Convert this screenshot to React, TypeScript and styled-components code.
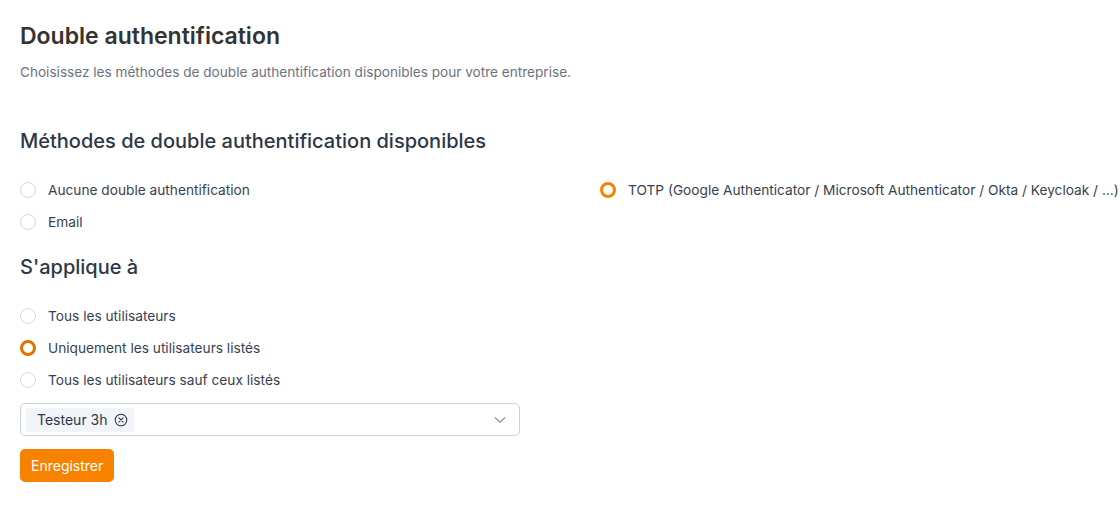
import React, { useState } from 'react';
import styled, { createGlobalStyle } from 'styled-components';

const GlobalStyle = createGlobalStyle`
  html, body {
    margin: 0;
    padding: 0;
    background: #ffffff;
    overflow: hidden;
  }
  body {
    font-family: Inter, "Noto Sans", sans-serif;
    -webkit-font-smoothing: antialiased;
  }
`;

const Page = styled.div`
  padding: 20px 0 0 20px;
`;

const Title = styled.h1`
  margin: 0;
  font-size: 23px;
  line-height: 32px;
  font-weight: 600;
  color: #333333;
`;

const Subtitle = styled.p`
  margin: 10px 0 0 0;
  font-size: 13.6px;
  line-height: 20px;
  color: #6b7280;
`;

const SectionTitle = styled.h2<{ $top: number }>`
  margin: ${({ $top }) => $top}px 0 0 0;
  font-size: 20px;
  line-height: 28px;
  font-weight: 500;
  color: #2d3748;
`;

const OptionGrid = styled.div`
  display: grid;
  grid-template-columns: 580px 1fr;
  grid-auto-flow: column;
  grid-template-rows: repeat(2, 32px);
  margin-top: 19px;
`;

const OptionList = styled.div`
  display: flex;
  flex-direction: column;
  margin-top: 19px;
`;

const Option = styled.label`
  display: flex;
  align-items: center;
  gap: 12px;
  height: 32px;
  cursor: pointer;
  font-size: 13.7px;
  color: #374151;
  white-space: nowrap;
`;

const RadioDot = styled.span<{ $checked: boolean; $shade: string }>`
  box-sizing: border-box;
  width: 16px;
  height: 16px;
  border-radius: 50%;
  flex-shrink: 0;
  border: ${({ $checked, $shade }) =>
    $checked ? `3px solid ${$shade}` : '1px solid #d1d9e4'};
  background: #ffffff;
`;

const Select = styled.div`
  box-sizing: border-box;
  display: flex;
  align-items: center;
  justify-content: space-between;
  width: 500px;
  height: 33px;
  margin-top: 7px;
  padding: 0 12px 0 5px;
  border: 1px solid #cbd3df;
  border-radius: 5px;
  background: #ffffff;
`;

const Tag = styled.span`
  display: inline-flex;
  align-items: center;
  gap: 6px;
  height: 24px;
  padding: 0 6px 0 11px;
  border-radius: 3px;
  background: #f1f4f8;
  font-size: 14px;
  color: #2d3748;
`;

const SaveButton = styled.button`
  margin-top: 13px;
  height: 33px;
  padding: 0 11px;
  border: none;
  border-radius: 5px;
  background: #f78200;
  color: #ffffff;
  font-family: inherit;
  font-size: 14px;
  cursor: pointer;
`;

const RemoveIcon = () => (
  <svg width="14" height="14" viewBox="0 0 16 16" fill="none" stroke="#2d3748" strokeWidth="1.2">
    <circle cx="8" cy="8" r="6.6" />
    <path d="M5.6 5.6l4.8 4.8M10.4 5.6l-4.8 4.8" strokeLinecap="round" />
  </svg>
);

const Chevron = () => (
  <svg width="14" height="14" viewBox="0 0 16 16" fill="none" stroke="#8a94a6" strokeWidth="1.4">
    <path d="M2.5 5.5L8 10.5l5.5-5" strokeLinecap="round" strokeLinejoin="round" />
  </svg>
);

const methods = [
  { id: 'none', label: 'Aucune double authentification' },
  { id: 'email', label: 'Email' },
  { id: 'totp', label: 'TOTP (Google Authenticator / Microsoft Authenticator / Okta / Keycloak / ...)' },
];

const scopes = [
  { id: 'all', label: 'Tous les utilisateurs' },
  { id: 'only', label: 'Uniquement les utilisateurs listés' },
  { id: 'except', label: 'Tous les utilisateurs sauf ceux listés' },
];

const App: React.FC = () => {
  const [method, setMethod] = useState('totp');
  const [scope, setScope] = useState('only');

  return (
    <>
      <GlobalStyle />
      <Page>
        <Title>Double authentification</Title>
        <Subtitle>Choisissez les méthodes de double authentification disponibles pour votre entreprise.</Subtitle>

        <SectionTitle $top={45}>Méthodes de double authentification disponibles</SectionTitle>
        <OptionGrid>
          {methods.map((m) => (
            <Option key={m.id} onClick={() => setMethod(m.id)}>
              <RadioDot $checked={method === m.id} $shade="#f78200" />
              {m.label}
            </Option>
          ))}
        </OptionGrid>

        <SectionTitle $top={15}>S'applique à</SectionTitle>
        <OptionList>
          {scopes.map((s) => (
            <Option key={s.id} onClick={() => setScope(s.id)}>
              <RadioDot $checked={scope === s.id} $shade="#dd7300" />
              {s.label}
            </Option>
          ))}
        </OptionList>

        <Select>
          <Tag>
            Testeur 3h
            <RemoveIcon />
          </Tag>
          <Chevron />
        </Select>

        <SaveButton>Enregistrer</SaveButton>
      </Page>
    </>
  );
};

export default App;
